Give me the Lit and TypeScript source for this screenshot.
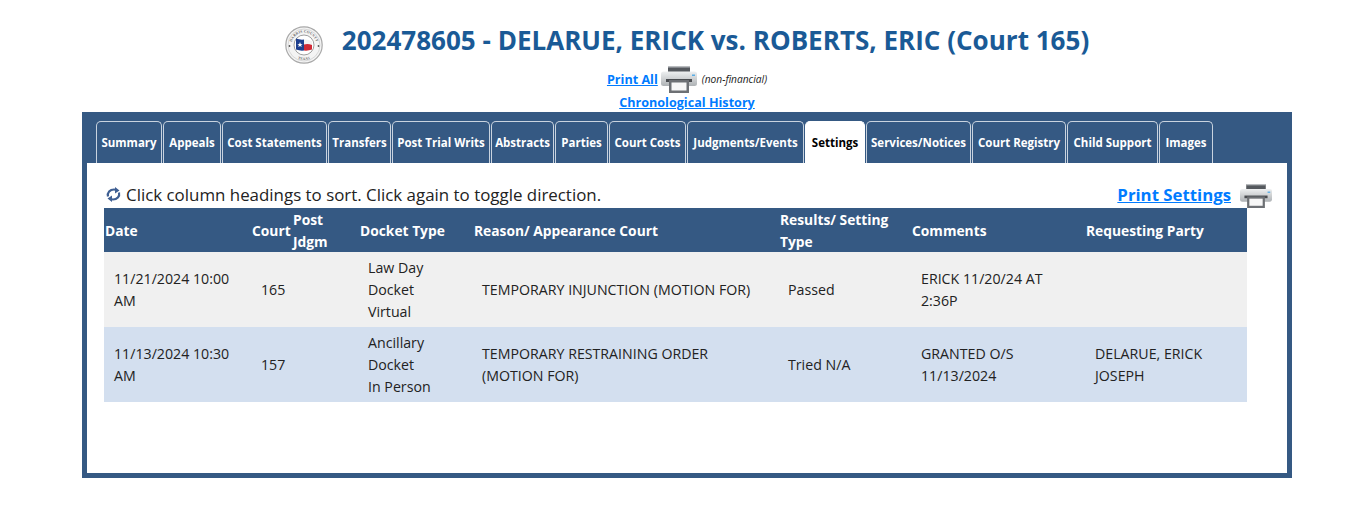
import { LitElement, html, css } from "lit";
import { customElement } from "lit/decorators.js";

const tabs: [string, number][] = [["Summary",66],["Appeals",58],["Cost Statements",105],["Transfers",63],["Post Trial Writs",98],["Abstracts",63],["Parties",53],["Court Costs",77],["Judgments/Events",117],["Settings",60],["Services/Notices",105],["Court Registry",94],["Child Support",91],["Images",54]];

const printer = (w: number, id: string) => html`<svg class="printer" width=${w} viewBox="0 0 36 27" aria-hidden="true">
  <defs><linearGradient id=${id} x1="0" y1="0" x2="0" y2="1"><stop offset="0" stop-color="#eef0f1"/><stop offset="1" stop-color="#aeb2b5"/></linearGradient></defs>
  <rect x="7" y="0" width="22" height="7" rx="1" fill="#55595e"/>
  <rect x="7" y="0" width="22" height="1.5" fill="#b9bcbf"/>
  <rect x="0" y="5.5" width="36" height="14.5" rx="2.5" fill="url(#${id})"/>
  <rect x="5" y="13" width="26" height="3" fill="#4a4d51"/>
  <rect x="31" y="8.5" width="3" height="1.5" fill="#5aaee6"/>
  <rect x="8" y="14" width="20" height="13" fill="#6d7074"/>
  <rect x="10.5" y="16.5" width="15" height="8" fill="#f7f7f7"/>
</svg>`;

@customElement("app-root")
export class AppRoot extends LitElement {
  static styles = css`
    :host { display: block; font-family: "Open Sans", "Noto Sans", sans-serif; color: #222; width: 1348px; height: 521px; overflow: hidden; background: #fff; }
    .page { width: 1374px; }
    a { color: #007bff; text-decoration: underline; font-weight: 700; }
    .title { display: flex; justify-content: center; align-items: flex-start; gap: 19px; padding-top: 24px; height: 40px; }
    .logo { margin-top: 2px; flex: none; }
    .logo text { font-family: "Liberation Serif", serif; font-size: 3.6px; font-weight: 700; fill: #666; letter-spacing: 0.2px; }
    .title h1 { margin: 0; font-size: 26.04px; line-height: 32px; font-weight: 700; color: #1a5a96; white-space: nowrap; }
    .links { display: flex; flex-direction: column; align-items: center; font-size: 12.6px; padding-top: 1px; }
    .print { display: flex; align-items: center; height: 28px; gap: 3px; }
    .nf { font-size: 10.2px; font-style: italic; margin-left: 2px; }
    .chron { line-height: 20px; height: 19px; }
    .panel { margin: 0 82px; border: 5px solid #355983; border-top-width: 9px; height: 352px; background: #fff; }
    .tabs { background: #355983; display: flex; padding-left: 9px; gap: 1px; height: 42px; align-items: flex-end; }
    .tab { color: #fff; font-size: 11.5px; font-weight: 700; height: 42px; box-sizing: border-box; padding-top: 13px; text-align: center; border: 1px solid #c9d3df; border-bottom: 0; border-radius: 5px 5px 0 0; white-space: nowrap; }
    .tab.on { background: #fff; color: #000; border-color: #fff; }
    .hint { display: flex; align-items: center; justify-content: space-between; height: 45px; padding: 17px 15px 0 19px; box-sizing: border-box; }
    .hint .l { display: flex; align-items: center; gap: 5px; font-size: 16.9px; }
    .hint .r { display: flex; align-items: center; gap: 9px; }
    .hint .r .printer { margin-top: 4px; }
    .hint a { font-size: 16.8px; }
    table { margin-left: 17px; width: 1143px; border-collapse: collapse; font-size: 14.2px; table-layout: fixed; }
    .c1 { width: 147px; } .c2 { width: 42px; } .c3 { width: 65px; } .c4 { width: 114px; }
    .c5 { width: 306px; } .c6 { width: 132px; } .c7 { width: 174px; } .c8 { width: 163px; }
    th { background: #355983; color: #fff; font-size: 13.8px; font-weight: 700; text-align: left; padding: 1px 0 0 1px; line-height: 21.5px; height: 44px; box-sizing: border-box; }
    th.post { padding-left: 0; }
    th.s { padding-left: 2px; }
    td { padding: 0 8px 0 10px; line-height: 22px; height: 75px; box-sizing: border-box; }
    td.s { padding-left: 11px; }
    tr.a td { background: #f0f0f0; }
    tr.b td { background: #d3dfef; }
    svg { display: block; }
  `;

  render() {
    return html`<div class="page">
      <div class="title">
        <svg class="logo" width="38" height="38" viewBox="0 0 38 38" aria-hidden="true">
          <defs>
            <path id="arcTop" d="M6.5 19a12.5 12.5 0 0 1 25 0"/>
            <path id="arcBot" d="M4 19a15 15 0 0 0 30 0"/>
          </defs>
          <circle cx="19" cy="19" r="18.2" fill="#f4f4f4" stroke="#a8a8a8" stroke-width="1.2"/>
          <circle cx="19" cy="19" r="16" fill="none" stroke="#c4c4c4" stroke-width="0.6"/>
          <text text-anchor="middle"><textPath href="#arcTop" startOffset="50%">HARRIS COUNTY</textPath></text>
          <text text-anchor="middle"><textPath href="#arcBot" startOffset="50%">TEXAS</textPath></text>
          <circle cx="4.5" cy="20" r="0.9" fill="#555"/>
          <circle cx="33.5" cy="20" r="0.9" fill="#555"/>
          <circle cx="19" cy="19" r="10" fill="#fff" stroke="#888" stroke-width="0.8"/>
          <path d="M11 12.5q4 1.5 8 1v11q-4 .5-8-1z" fill="#1d3f8f"/>
          <path d="M19 13.5q4-.5 8 1.5v4.5q-4-1.5-8-.5z" fill="#f2f2f2"/>
          <path d="M19 18.5q4-1 8 .5v4.5q-4 1.5-8 1z" fill="#cf2a36"/>
          <path d="M15 16l.7 1.9h2l-1.6 1.2.6 2-1.7-1.2-1.7 1.200.6-2-1.6-1.2h2z" fill="#fff"/>
        </svg>
        <h1>202478605 - DELARUE, ERICK vs. ROBERTS, ERIC (Court 165)</h1>
      </div>
      <div class="links">
        <div class="print"><a href="#">Print All</a>${printer(36, "pg1")}<span class="nf">(non-financial)</span></div>
        <a class="chron" href="#">Chronological History</a>
      </div>
      <div class="panel">
        <div class="tabs">${tabs.map(([t, w]) => html`<div class="tab ${t === "Settings" ? "on" : ""}" style="width:${w}px">${t}</div>`)}</div>
        <div class="hint">
          <div class="l">
            <svg width="15" height="15" viewBox="0 0 15 15" aria-hidden="true">
              <path d="M2 9.5C1 5.500 4 2.500 8 2.500c1 0 1.800.2 2.500.6" fill="none" stroke="#3f5f93" stroke-width="2.200"/>
              <path d="M13 5.500c1 4-2 7-6 7-1 0-1.800-.2-2.500-.6" fill="none" stroke="#3f5f93" stroke-width="2.200"/>
              <path d="M9 0l4.500 3.500L9 6.500zM6 15l-4.500-3.500L6 8.500z" fill="#3f5f93"/>
            </svg>
            <span>Click column headings to sort. Click again to toggle direction.</span>
          </div>
          <div class="r"><a href="#">Print Settings</a>${printer(32, "pg2")}</div>
        </div>
        <table>
          <colgroup><col class="c1"><col class="c2"><col class="c3"><col class="c4"><col class="c5"><col class="c6"><col class="c7"><col class="c8"></colgroup>
          <tr><th>Date</th><th>Court</th><th class="post">Post Jdgm</th><th class="s">Docket Type</th><th class="s">Reason/ Appearance Court</th><th class="s">Results/ Setting Type</th><th class="s">Comments</th><th class="s">Requesting Party</th></tr>
          <tr class="a"><td>11/21/2024 10:00 AM</td><td>165</td><td></td><td>Law Day<br>Docket<br>Virtual</td><td>TEMPORARY INJUNCTION (MOTION FOR)</td><td>Passed</td><td class="s">ERICK 11/20/24 AT 2:36P</td><td class="s"></td></tr>
          <tr class="b"><td>11/13/2024 10:30 AM</td><td>157</td><td></td><td>Ancillary<br>Docket<br>In Person</td><td>TEMPORARY RESTRAINING ORDER (MOTION FOR)</td><td>Tried N/A</td><td class="s">GRANTED O/S 11/13/2024</td><td class="s">DELARUE, ERICK JOSEPH</td></tr>
        </table>
      </div>
    </div>`;
  }
}
